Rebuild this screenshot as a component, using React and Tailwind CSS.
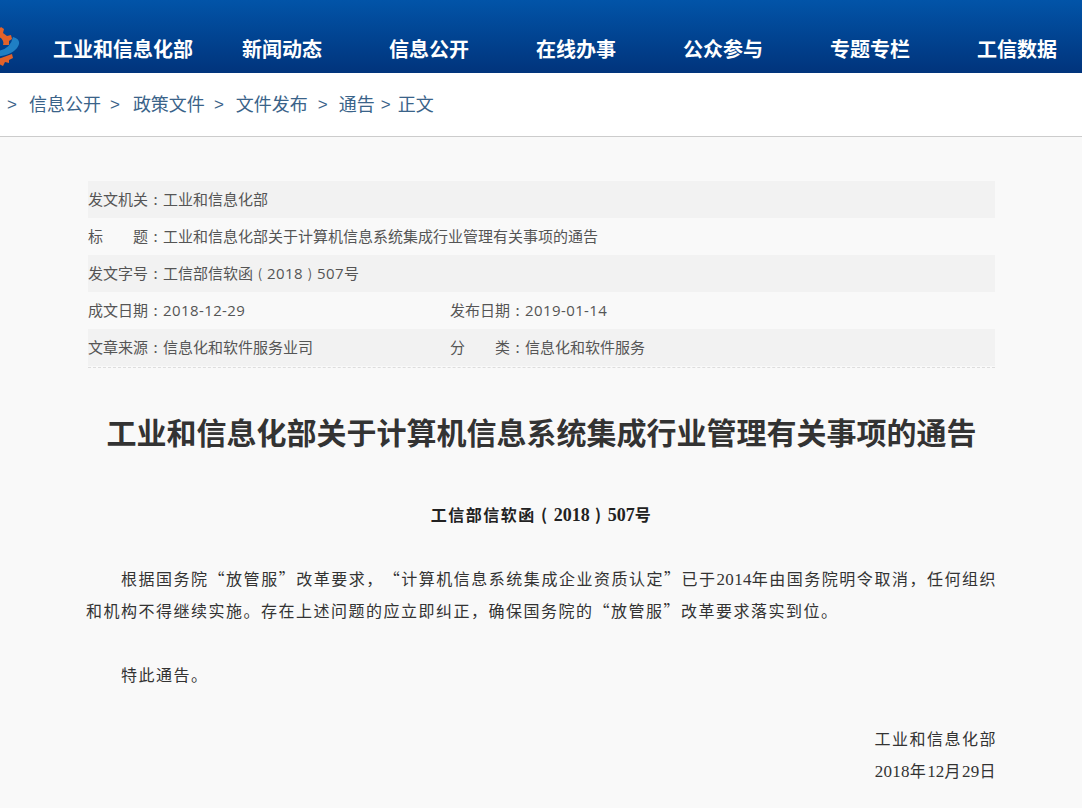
const NAV = ['新闻动态', '信息公开', '在线办事', '公众参与', '专题专栏', '工信数据']

const Num = ({ children, className = '' }) => (
  <span className={`font-['Open_Sans',sans-serif] tracking-[0.4px] leading-none ${className}`}>{children}</span>
)
const Serif = ({ children, className = '' }) => (
  <span className={`font-['Liberation_Serif',serif] leading-none ${className}`}>{children}</span>
)
const Paren = ({ children }) => <span className="inline-block w-[14px] text-center text-[13px] leading-none">{children}</span>

const META = [
  { cells: [{ label: '发文机关', value: '工业和信息化部' }] },
  { cells: [{ label: <>标<span className="inline-block w-[30px]" />题</>, value: '工业和信息化部关于计算机信息系统集成行业管理有关事项的通告' }] },
  { cells: [{ label: '发文字号', value: <>工信部信软函<Paren>(</Paren><Num>2018</Num><Paren>)</Paren><Num>507</Num>号</> }] },
  { cells: [{ label: '成文日期', value: <Num>2018-12-29</Num> }, { label: '发布日期', value: <Num>2019-01-14</Num> }] },
  {
    cells: [
      { label: '文章来源', value: '信息化和软件服务业司' },
      { label: <>分<span className="inline-block w-[30px]" />类</>, value: '信息化和软件服务' },
    ],
  },
]

function Logo() {
  return (
    <svg width="20" height="42" viewBox="0 0 20 42" className="shrink-0">
      <path d="M-8 4 L-2 5 L1 2 L4 4 L3 8 L7 11 L11 10 L12 14 L9 16 L9 20 L3 20 A6 6 0 0 0 -3 12 L-8 12 Z" fill="#e2622a" />
      <path d="M-6 26 Q10 26 13 12 Q20 14 19 19 Q16 30 -6 32 Z" fill="#1f7fc4" />
      <path d="M-6 34 L1 33 L12 29 L13 33 L9 35 L9 38 L5 37 L3 41 L-1 39 L-6 41 Z" fill="#e2622a" />
    </svg>
  )
}

function Crumb({ children }) {
  return <span className="text-[#3a6389]">{children}</span>
}

function Sep({ className }) {
  return <span className={`text-[#3a6389] text-[17px] mt-[5px] font-['Liberation_Sans',sans-serif] ${className}`}>&gt;</span>
}

function MetaRow({ row }) {
  return (
    <div className="flex h-[37px] items-center pb-[1px] odd:bg-[#f2f2f2] text-[15px] text-[#555]">
      {row.cells.map((c, i) => (
        <div key={i} className="w-[362px] whitespace-nowrap">
          {c.label}<span className="inline-block w-[15px] text-center">:</span>{c.value}
        </div>
      ))}
    </div>
  )
}

export default function App() {
  return (
    <div className="h-[808px] overflow-hidden bg-[#f9f9f9] font-['Noto_Sans_CJK_SC',sans-serif] [text-spacing-trim:space-all]" lang="zh-CN">
      <header className="h-[73px] flex items-end pb-[10px] bg-gradient-to-b from-[#0254a8] to-[#01347c] overflow-hidden relative">
        <div className="absolute left-0 top-[25px]"><Logo /></div>
        <nav className="flex items-center pl-[53px] text-white text-xl font-bold whitespace-nowrap">
          <a className="mr-[49px]">工业和信息化部</a>
          <div className="flex gap-[67px]">
            {NAV.map((n) => <a key={n}>{n}</a>)}
          </div>
        </nav>
      </header>

      <div className="h-[64px] flex items-center bg-white border-b border-[#ccc] text-lg whitespace-nowrap pl-[7px] pb-[3px]">
        <Sep className="mr-[12px]" /><Crumb>信息公开</Crumb>
        <Sep className="ml-[9px] mr-[13px]" /><Crumb>政策文件</Crumb>
        <Sep className="ml-[9px] mr-[12px]" /><Crumb>文件发布</Crumb>
        <Sep className="ml-[10px] mr-[11px]" /><Crumb>通告</Crumb>
        <Sep className="ml-[6px] mr-[7px]" /><Crumb>正文</Crumb>
      </div>

      <main className="w-[907px] ml-[88px] pt-[44px]">
        <div className="border-b border-dashed border-[#ddd] pb-[1px]">
          {META.map((row, i) => <MetaRow key={i} row={row} />)}
        </div>

        <h1 className="text-[30px] leading-[40px] font-bold text-center text-[#333] mt-[43px] whitespace-nowrap">
          工业和信息化部关于计算机信息系统集成行业管理有关事项的通告
        </h1>

        <p className="text-base font-bold text-center text-[#222] mt-[47px] leading-[32px] tracking-[1.5px]">
          工信部信软函<span className="inline-block w-[18px] text-center">(</span><Serif className="text-[18px] tracking-normal">2018</Serif><span className="inline-block w-[18px] text-center">)</span><Serif className="text-[18px] tracking-normal">507</Serif>号
        </p>

        <div className="-ml-[2px] w-[911px] mt-[32px] text-base leading-[32px] tracking-[1.5px] text-[#333]">
          <p className="text-justify indent-[35px]">
            根据国务院“放管服”改革要求，“计算机信息系统集成企业资质认定”已于<Serif className="text-[17px] tracking-[0.3px]">2014</Serif>年由国务院明令取消，任何组织和机构不得继续实施。存在上述问题的应立即纠正，确保国务院的“放管服”改革要求落实到位。
          </p>
          <p className="indent-[35px] mt-[32px]">特此通告。</p>
          <p className="text-right mt-[32px]">工业和信息化部</p>
          <p className="text-right">
            <Serif className="text-[17px] tracking-[0.2px]">2018</Serif>年<Serif className="text-[17px] tracking-[0.2px]">12</Serif>月<Serif className="text-[17px] tracking-[0.2px]">29</Serif>日
          </p>
        </div>
      </main>
    </div>
  )
}
